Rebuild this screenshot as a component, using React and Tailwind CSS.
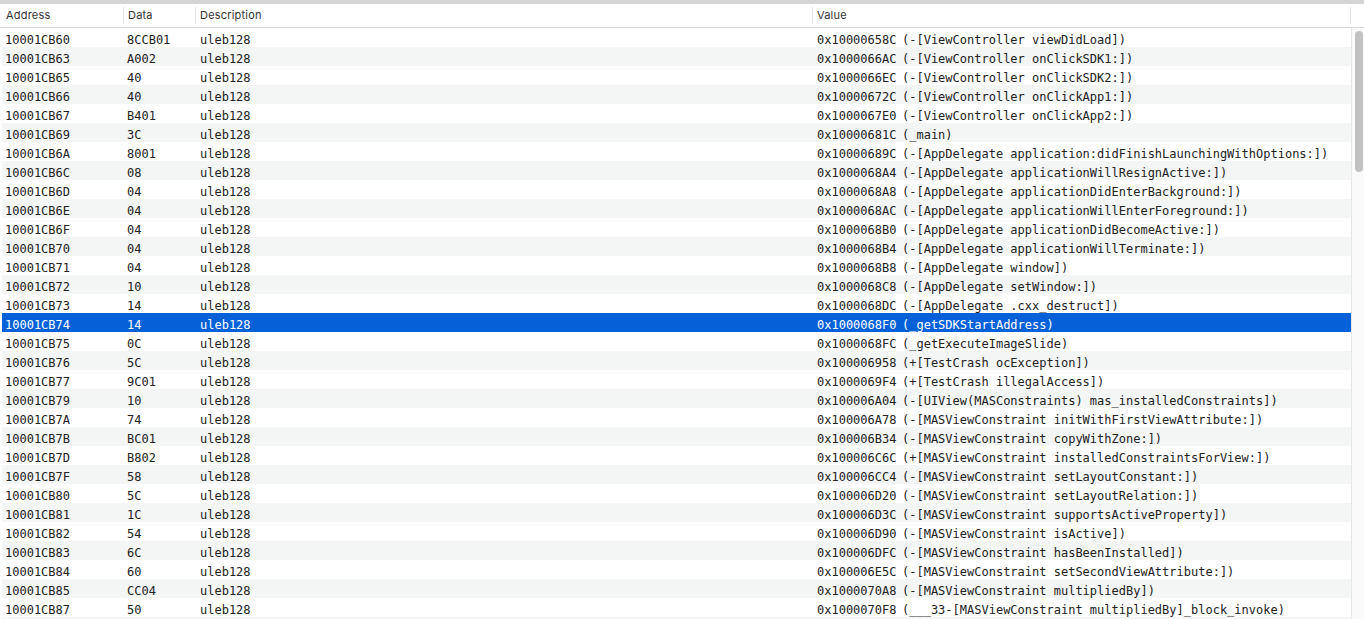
import React from 'react';

const rows = [
  ['10001CB60', '8CCB01', '0x10000658C', '(-[ViewController viewDidLoad])'],
  ['10001CB63', 'A002', '0x1000066AC', '(-[ViewController onClickSDK1:])'],
  ['10001CB65', '40', '0x1000066EC', '(-[ViewController onClickSDK2:])'],
  ['10001CB66', '40', '0x10000672C', '(-[ViewController onClickApp1:])'],
  ['10001CB67', 'B401', '0x1000067E0', '(-[ViewController onClickApp2:])'],
  ['10001CB69', '3C', '0x10000681C', '(_main)'],
  ['10001CB6A', '8001', '0x10000689C', '(-[AppDelegate application:didFinishLaunchingWithOptions:])'],
  ['10001CB6C', '08', '0x1000068A4', '(-[AppDelegate applicationWillResignActive:])'],
  ['10001CB6D', '04', '0x1000068A8', '(-[AppDelegate applicationDidEnterBackground:])'],
  ['10001CB6E', '04', '0x1000068AC', '(-[AppDelegate applicationWillEnterForeground:])'],
  ['10001CB6F', '04', '0x1000068B0', '(-[AppDelegate applicationDidBecomeActive:])'],
  ['10001CB70', '04', '0x1000068B4', '(-[AppDelegate applicationWillTerminate:])'],
  ['10001CB71', '04', '0x1000068B8', '(-[AppDelegate window])'],
  ['10001CB72', '10', '0x1000068C8', '(-[AppDelegate setWindow:])'],
  ['10001CB73', '14', '0x1000068DC', '(-[AppDelegate .cxx_destruct])'],
  ['10001CB74', '14', '0x1000068F0', '(_getSDKStartAddress)'],
  ['10001CB75', '0C', '0x1000068FC', '(_getExecuteImageSlide)'],
  ['10001CB76', '5C', '0x100006958', '(+[TestCrash ocException])'],
  ['10001CB77', '9C01', '0x1000069F4', '(+[TestCrash illegalAccess])'],
  ['10001CB79', '10', '0x100006A04', '(-[UIView(MASConstraints) mas_installedConstraints])'],
  ['10001CB7A', '74', '0x100006A78', '(-[MASViewConstraint initWithFirstViewAttribute:])'],
  ['10001CB7B', 'BC01', '0x100006B34', '(-[MASViewConstraint copyWithZone:])'],
  ['10001CB7D', 'B802', '0x100006C6C', '(+[MASViewConstraint installedConstraintsForView:])'],
  ['10001CB7F', '58', '0x100006CC4', '(-[MASViewConstraint setLayoutConstant:])'],
  ['10001CB80', '5C', '0x100006D20', '(-[MASViewConstraint setLayoutRelation:])'],
  ['10001CB81', '1C', '0x100006D3C', '(-[MASViewConstraint supportsActiveProperty])'],
  ['10001CB82', '54', '0x100006D90', '(-[MASViewConstraint isActive])'],
  ['10001CB83', '6C', '0x100006DFC', '(-[MASViewConstraint hasBeenInstalled])'],
  ['10001CB84', '60', '0x100006E5C', '(-[MASViewConstraint setSecondViewAttribute:])'],
  ['10001CB85', 'CC04', '0x1000070A8', '(-[MASViewConstraint multipliedBy])'],
  ['10001CB87', '50', '0x1000070F8', '(___33-[MASViewConstraint multipliedBy]_block_invoke)'],
];

const SELECTED = 15;

const HeaderCell = ({ label, width, pad }) => (
  <div className={`${width} ${pad} h-[17px] shrink-0 border-r border-[#e4e4e4] text-[11px] leading-[17px] tracking-[0.2px] text-[#333333]`}>
    {label}
  </div>
);

const Row = ({ row, index }) => {
  let bg = index % 2 === 1 ? 'bg-[#f4f5f5]' : 'bg-white';
  let color = 'text-[#222222]';
  if (index === SELECTED) {
    bg = 'bg-[#0661d8]';
    color = 'text-white';
  }
  return (
    <div className="h-[19px] pl-[2px] whitespace-pre">
      <div className={`flex h-full w-full pt-[3px] ${bg} ${color}`}>
        <div className="w-[125px] shrink-0 pl-[3px]">{row[0]}</div>
        <div className="w-[73px] shrink-0">{row[1]}</div>
        <div className="w-[617px] shrink-0">uleb128</div>
        <div className="w-[85px] shrink-0">{row[2]}</div>
        <div>{row[3]}</div>
      </div>
    </div>
  );
};

const App = () => {
  return (
    <div className="flex h-[619px] w-[1364px] flex-col overflow-hidden bg-white">
      <div className="h-[4px] shrink-0 bg-[#d5d5d5]" />
      <div className="flex h-[24px] shrink-0 items-center border-b border-[#d9d9d9] bg-white pl-px font-['Inter',sans-serif]">
        <HeaderCell label="Address" width="w-[123px]" pad="pl-[5px]" />
        <HeaderCell label="Data" width="w-[72px]" pad="pl-[4px]" />
        <HeaderCell label="Description" width="w-[617px]" pad="pl-[4px]" />
        <HeaderCell label="Value" width="w-[538px]" pad="pl-[4px]" />
      </div>
      <div className="flex min-h-0 flex-1">
        <div className="w-[1351px] shrink-0 font-['DejaVu_Sans_Mono',monospace] text-[12px] leading-[19px]">
          {rows.map((row, i) => (
            <Row key={row[0]} row={row} index={i} />
          ))}
          <div className="ml-[2px] h-[19px] bg-[#f4f5f5]" />
        </div>
        <div className="flex-1 border-l border-[#e6e6e6] bg-[#fafafa] pt-[3px] pl-[3px]">
          <div className="h-[141px] w-[8px] rounded-full bg-[#c2c2c2]" />
        </div>
      </div>
    </div>
  );
};

export default App;
